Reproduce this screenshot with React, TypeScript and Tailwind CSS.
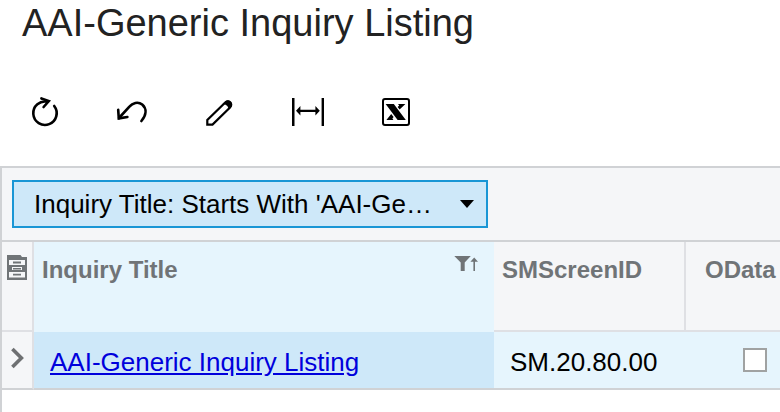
import { useState } from "react";
import type { ReactNode } from "react";

const RefreshIcon = () => (
  <svg viewBox="0 0 32 32" className="size-8" fill="none" stroke="currentColor" strokeWidth="2.6" strokeLinecap="round">
    <path d="M19.6 5.8A11.7 11.7 0 1 0 26.2 10" />
    <path d="M13.4 2.4 20.8 5 15.6 11" />
  </svg>
);

const UndoIcon = () => (
  <svg viewBox="0 0 32 32" className="size-8" fill="none" stroke="currentColor" strokeWidth="2.6" strokeLinecap="round">
    <path d="M3 22 13.4 10.6C16.4 7 22 5 26.2 8.6 31 12.8 30.4 19 25.4 25" />
    <path d="M2.2 13.8 2.8 22.4 11.4 21" />
  </svg>
);

const EditIcon = () => (
  <svg viewBox="0 0 32 32" className="size-8" fill="none" stroke="currentColor" strokeWidth="2.2">
    <path d="M3.3 28.6V23.9L21 6.7C22.4 5.2 24.5 5.3 25.9 6.6 27.3 8 27.3 10 26 11.5L8.5 28.6Z" />
    <path d="M18.6 8 21.4 5.2C23.4 3.6 25.4 4 27 5.6 28.6 7.2 28.7 9.4 27.3 11L24.6 13.8C24.8 10.8 22.4 8.2 18.6 8Z" fill="currentColor" stroke="none" />
  </svg>
);

const FitColumnsIcon = () => (
  <svg viewBox="0 0 32 32" className="size-8" fill="currentColor">
    <path d="M0 2H2.5V30H0ZM29.6 2H32V30H29.6Z" />
    <path d="M4 14.8 8.4 10V13.7H23.4V10L27.8 14.8 23.4 19.6V15.9H8.4V19.6Z" />
  </svg>
);

const ExcelIcon = () => (
  <svg viewBox="0 0 32 32" className="size-8" fill="currentColor">
    <rect x="3" y="3" width="26" height="26" rx="2" fill="none" stroke="currentColor" strokeWidth="2" />
    <path d="M5.6 8H13.8L25.8 24H17.6Z" />
    <path d="M18 8H25.4L19.6 13.6 17.6 11 19.2 9.4Z" />
    <path d="M6.4 24 11.2 17.9 13.6 21 12.4 22.6 13.4 24Z" />
  </svg>
);

const FilterSortIcon = () => (
  <svg viewBox="0 0 24 16" className="h-4 w-6" fill="currentColor">
    <path d="M.3 0H16.8L10.7 6.6V15H6.7V6.6Z" />
    <path d="M20.2 1.4 24 5.8H21V15H19.4V5.8H16.4Z" />
  </svg>
);

const FilesIcon = () => (
  <svg viewBox="0 0 20 26" className="h-[26px] w-5">
    <path d="M0 0H13.5L15 2H20V25H0Z" fill="#707477" />
    <path d="M2 5H18V10H2ZM5 12H15V15H5ZM2 17H18V22.5H2Z" fill="#f5f6f8" />
    <path d="M6 6.6H14V8.4H6ZM6 12.9H14V14.4H6ZM6 18.8H14V20.6H6Z" fill="#707477" />
  </svg>
);

const ChevronIcon = () => (
  <svg viewBox="0 0 14 22" className="h-[22px] w-3.5" fill="none" stroke="#6e7072" strokeWidth="3.6">
    <path d="M2.4 2 11.4 11 2.4 20" />
  </svg>
);

const actions: { label: string; icon: ReactNode }[] = [
  { label: "Refresh", icon: <RefreshIcon /> },
  { label: "Undo", icon: <UndoIcon /> },
  { label: "Edit", icon: <EditIcon /> },
  { label: "Fit columns", icon: <FitColumnsIcon /> },
  { label: "Export to Excel", icon: <ExcelIcon /> },
];

const rows = [
  { title: "AAI-Generic Inquiry Listing", screenId: "SM.20.80.00", odata: false },
];

const App = () => {
  const [exposed, setExposed] = useState(rows.map((row) => row.odata));

  const toggle = (index: number) => {
    setExposed((prev) => prev.map((value, i) => (i === index ? !value : value)));
  };

  return (
    <div className="flex min-h-screen flex-col overflow-hidden bg-white font-['Liberation_Sans',Arial,sans-serif] text-black">
      <h1 className="px-[22px] pt-px text-[38px] leading-[44px] text-[#222]">
        AAI-Generic Inquiry Listing
      </h1>

      <div className="flex gap-14 px-7 pt-[51px] pb-[38px]">
        {actions.map((action) => (
          <button key={action.label} type="button" aria-label={action.label}>
            {action.icon}
          </button>
        ))}
      </div>

      <main className="grow border-t-2 border-l-2 border-[#d0d2d5]">
        <div className="flex border-b-2 border-[#d0d2d5] bg-[#f5f6f8] px-2.5 py-3">
          <div className="relative">
            <select
              aria-label="Filter"
              className="block h-12 w-[476px] max-w-full appearance-none border-2 border-[#1a96d5] bg-[#cee8f9] pr-10 pl-5 text-[26px]"
            >
              <option>Inquiry Title: Starts With 'AAI-Ge…</option>
            </select>
            <svg viewBox="0 0 14 8" className="pointer-events-none absolute top-5 right-3.5 h-2 w-3.5">
              <path d="M0 0H14L7 8Z" />
            </svg>
          </div>
        </div>

        <table className="w-full table-fixed border-separate border-spacing-0 text-left">
          <colgroup>
            <col className="w-8" />
            <col className="w-[460px]" />
            <col className="w-48" />
            <col />
          </colgroup>
          <thead>
            <tr className="h-[90px] bg-[#f5f6f8] align-top text-2xl leading-7 text-[#707477]">
              <th aria-label="Files" className="border-r-2 border-b-2 border-[#dfe0e4] pt-[13px] pl-[5px]">
                <FilesIcon />
              </th>
              <th className="bg-[#e6f5fd] px-2 pt-3.5">
                <div className="flex justify-between pr-2">
                  Inquiry Title
                  <FilterSortIcon />
                </div>
              </th>
              <th className="border-r-2 border-b-2 border-[#dfe0e4] px-2 pt-3.5">SMScreenID</th>
              <th className="border-b-2 border-[#dfe0e4] pt-3.5 pl-[19px]">OData</th>
            </tr>
          </thead>
          <tbody>
            {rows.map((row, index) => (
              <tr key={row.title} className="h-[58px] bg-[#e6f5fd] text-[26px] leading-8">
                <td className="border-r-2 border-b-2 border-r-[#dfe0e4] border-b-[#d0d2d5] bg-[#f5f6f8] pb-1 pl-2">
                  <button type="button" aria-label="Open row" className="block">
                    <ChevronIcon />
                  </button>
                </td>
                <td className="border-b-2 border-[#d0d2d5] bg-[#cee8f9] px-4 pt-1">
                  <a href="#" className="text-[#0000dc] underline">
                    {row.title}
                  </a>
                </td>
                <td className="border-b-2 border-[#d0d2d5] px-4 pt-1">{row.screenId}</td>
                <td className="border-b-2 border-[#d0d2d5] pl-[57px]">
                  <input
                    type="checkbox"
                    aria-label="OData"
                    checked={exposed[index]}
                    onChange={() => toggle(index)}
                    className="block size-6 appearance-none border-2 border-[#a0a2a2] bg-white checked:bg-[#1a96d5]"
                  />
                </td>
              </tr>
            ))}
          </tbody>
        </table>
      </main>
    </div>
  );
};

export default App;
